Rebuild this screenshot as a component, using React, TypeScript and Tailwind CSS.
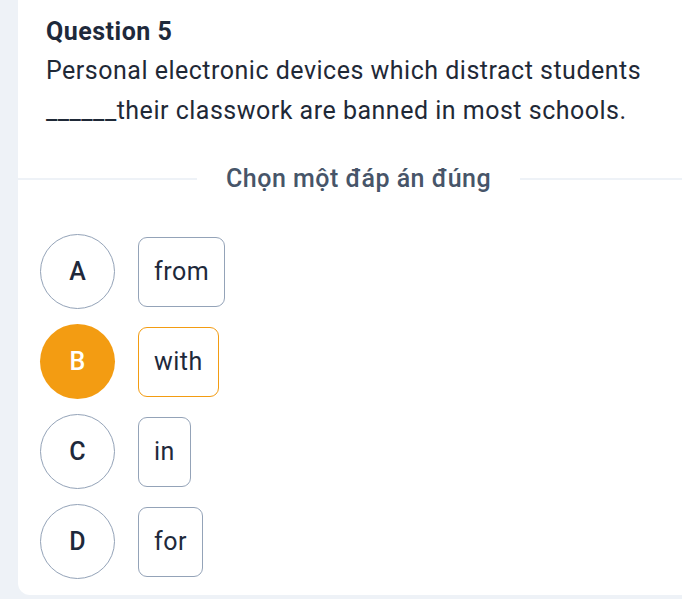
import React from "react";

const options = [
  { key: "A", text: "from", selected: false },
  { key: "B", text: "with", selected: true },
  { key: "C", text: "in", selected: false },
  { key: "D", text: "for", selected: false },
];

export default function App() {
  return (
    <div
      className="w-[682px] h-[599px] bg-[#eef2f7] overflow-hidden"
      style={{ fontFamily: "Roboto, 'Noto Sans', sans-serif" }}
    >
      <div className="ml-[18px] h-[595px] bg-white rounded-bl-[12px] pt-[16px]">
        <div className="pl-[28px] pr-[10px]">
          <h2 className="text-[25px] tracking-[0.5px] leading-[32px] font-bold text-[#1e293b]">Question 5</h2>
          <p className="mt-[3px] text-[25px] tracking-[0.5px] leading-[40px] text-[#1f2937] whitespace-nowrap">
            Personal electronic devices which distract students
            <br />
            ______their classwork are banned in most schools.
          </p>
        </div>
        <div className="mt-[32px] flex items-center">
          <div className="h-[2px] w-[179px] bg-[#eef2f7]" />
          <div className="px-[29px] text-[25px] tracking-[0.5px] leading-[32px] font-medium text-[#475569] whitespace-nowrap">
            Chọn một đáp án đúng
          </div>
          <div className="h-[2px] flex-1 bg-[#eef2f7]" />
        </div>
        <div className="mt-[39px] pl-[22px] flex flex-col gap-[15px]">
          {options.map((o) => (
            <div key={o.key} className="flex items-center gap-[23px]">
              <div
                className={
                  o.selected
                    ? "w-[75px] h-[75px] rounded-full bg-[#f39c12] text-white flex items-center justify-center text-[25px] font-medium"
                    : "w-[75px] h-[75px] rounded-full border border-[#94a3b8] text-[#1e293b] flex items-center justify-center text-[25px] font-medium"
                }
              >
                {o.key}
              </div>
              <div
                className={
                  o.selected
                    ? "h-[70px] px-[15px] rounded-[9px] border border-[#f39c12] flex items-center text-[25px] tracking-[0.5px] text-[#1e293b]"
                    : "h-[70px] px-[15px] rounded-[9px] border border-[#94a3b8] flex items-center text-[25px] tracking-[0.5px] text-[#1e293b]"
                }
              >
                {o.text}
              </div>
            </div>
          ))}
        </div>
      </div>
    </div>
  );
}
